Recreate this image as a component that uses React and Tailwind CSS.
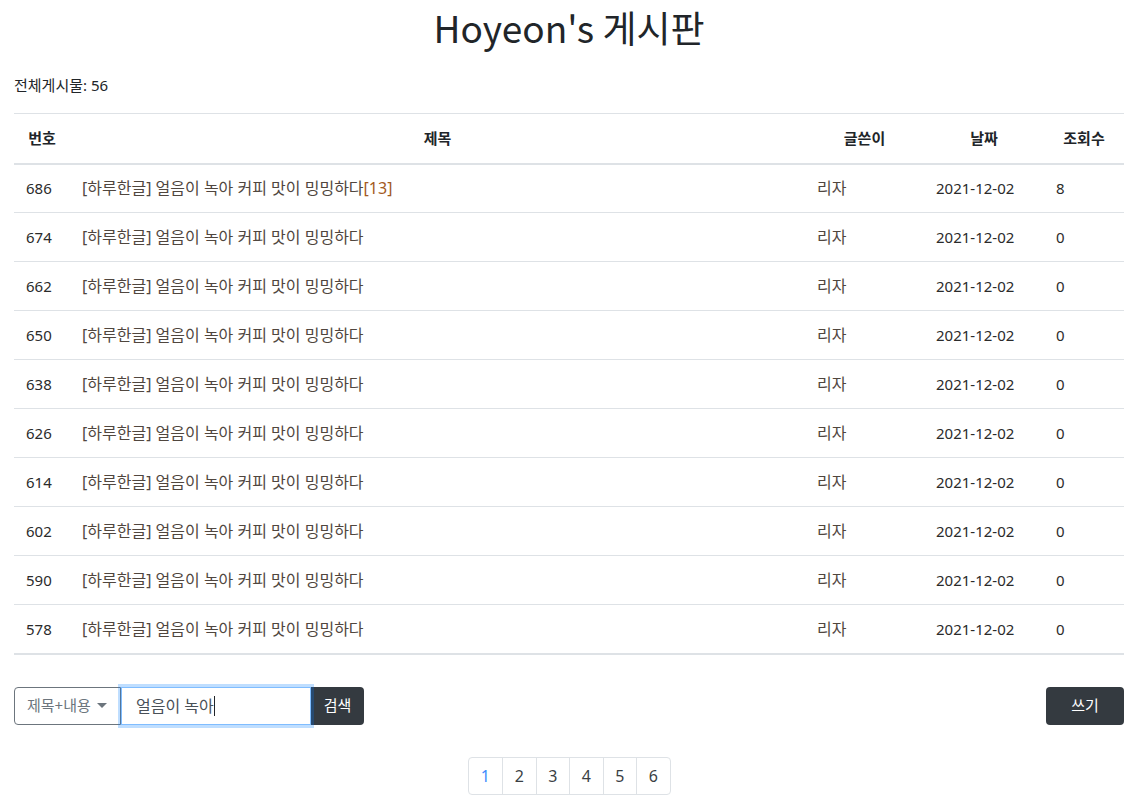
import React from 'react';

const posts = [686, 674, 662, 650, 638, 626, 614, 602, 590, 578].map((no, i) => ({
  no,
  title: '[하루한글] 얼음이 녹아 커피 맛이 밍밍하다',
  comments: i === 0 ? 13 : 0,
  writer: '리자',
  date: '2021-12-02',
  views: i === 0 ? 8 : 0,
}));

export default function App() {
  return (
    <div
      className="w-[1138px] min-h-[803px] bg-white text-[#212529] px-[14px]"
      style={{ fontFamily: '"Noto Sans", "Noto Sans CJK KR", sans-serif' }}
    >
      {/* Title */}
      <h1 className="text-center text-[37px] leading-[54px] font-normal text-[#212529]" style={{ fontFamily: '"Noto Sans CJK KR", sans-serif' }}>
        Hoyeon's 게시판
      </h1>

      <p className="mt-[19px] text-[15px] leading-[24px] text-[#212529]">전체게시물: 56</p>

      {/* Board */}
      <table className="w-full mt-[16px] border-collapse text-[15px]">
        <thead>
          <tr className="border-t border-[#dee2e6] border-b-2">
            <th className="w-[56px] h-[50px] px-3 font-bold text-center">번호</th>
            <th className="h-[50px] px-3 font-bold text-center">제목</th>
            <th className="w-[119px] h-[50px] px-3 font-bold text-center">글쓴이</th>
            <th className="w-[120px] h-[50px] px-3 font-bold text-center">날짜</th>
            <th className="w-[80px] h-[50px] px-3 font-bold text-center">조회수</th>
          </tr>
        </thead>
        <tbody>
          {posts.map((p, i) => (
            <tr
              key={p.no}
              className={
                i === posts.length - 1
                  ? 'border-t border-b-2 border-[#dee2e6]'
                  : 'border-t border-[#dee2e6]'
              }
            >
              <td className="h-[49px] px-3 text-left text-[#2b2b2b]">{p.no}</td>
              <td className="h-[49px] px-3 text-left text-[16px] text-[#50463e]">
                {p.title}
                {p.comments > 0 && <span className="text-[#a35a1e]">[{p.comments}]</span>}
              </td>
              <td className="h-[49px] px-3 text-left text-[16px] text-[#50463e]">{p.writer}</td>
              <td className="h-[49px] px-3 text-left text-[#2b2b2b]">{p.date}</td>
              <td className="h-[49px] px-3 text-left text-[#2b2b2b]">{p.views}</td>
            </tr>
          ))}
        </tbody>
      </table>

      {/* Search + write */}
      <div className="mt-[32px] flex items-center justify-between">
        <div className="flex h-[38px]">
          <div className="flex items-center gap-[6px] w-[107px] pl-3 border border-[#6c757d] rounded-l-[4px] text-[#6c757d] text-[15px] whitespace-nowrap">
            <span>제목+내용</span>
            <span className="shrink-0 w-0 h-0 border-l-[5px] border-r-[5px] border-t-[5px] border-l-transparent border-r-transparent border-t-[#6c757d]" />
          </div>
          <div className="flex items-center w-[190px] px-[14px] border border-[#80bdff] shadow-[0_0_0_3px_rgba(0,123,255,0.25)] text-[#495057] text-[16px] relative z-10 whitespace-nowrap">
            <span>얼음이 녹아</span>
            <span className="w-px h-[20px] bg-[#212529]" />
          </div>
          <button className="w-[53px] bg-[#343a40] text-white text-[15px] rounded-r-[4px]">검색</button>
        </div>
        <button className="w-[78px] h-[38px] bg-[#343a40] text-white text-[15px] rounded-[4px]">쓰기</button>
      </div>

      {/* Pagination */}
      <div className="mt-[32px] flex justify-center">
        <ul className="flex h-[38px] border border-[#dee2e6] rounded-[4px] text-[16px]">
          {[1, 2, 3, 4, 5, 6].map((n, i) => (
            <li
              key={n}
              className={
                'w-[33.5px] flex items-center justify-center ' +
                (i > 0 ? 'border-l border-[#dee2e6] ' : '') +
                (n === 1 ? 'text-[#3d8bfd]' : 'text-[#3a3f44]')
              }
            >
              {n}
            </li>
          ))}
        </ul>
      </div>
    </div>
  );
}
